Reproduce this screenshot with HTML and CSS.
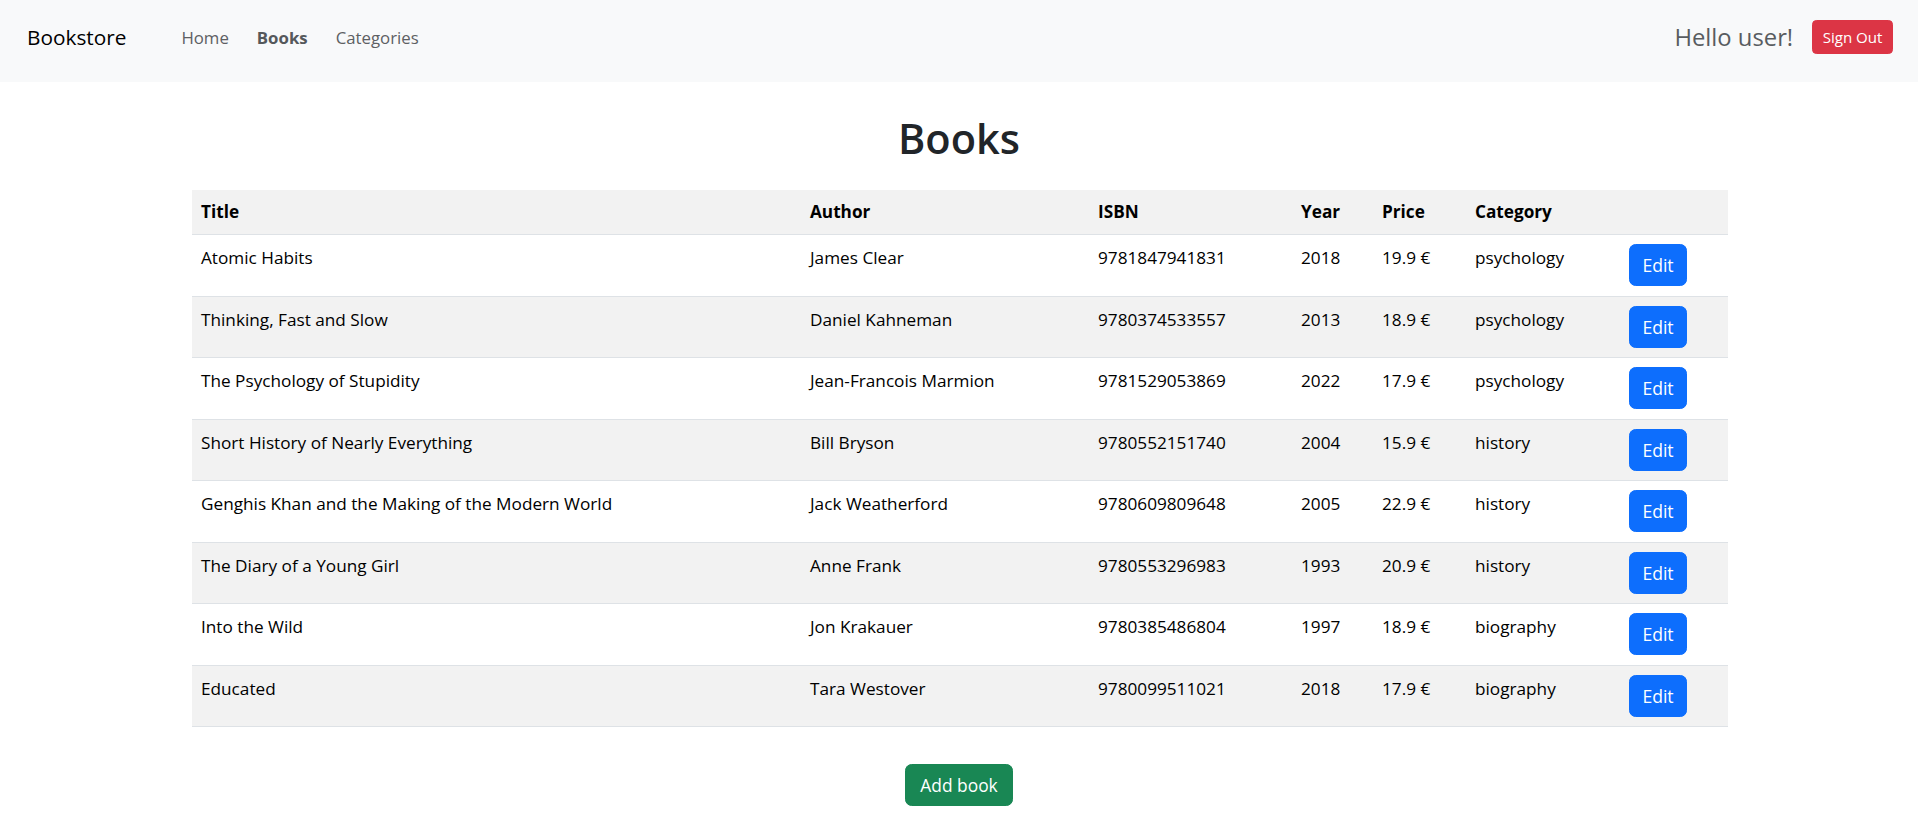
FILE: index.html
```html
<!DOCTYPE html>
<html lang="en">
<head>
<meta charset="utf-8">
<title>Bookstore</title>
<link rel="stylesheet" href="styles.css">
</head>
<body>
<nav class="navbar">
  <a class="brand" href="#">Bookstore</a>
  <ul class="nav-links">
    <li><a href="#" class="nav-link">Home</a></li>
    <li><a href="#" class="nav-link active">Books</a></li>
    <li><a href="#" class="nav-link">Categories</a></li>
  </ul>
  <div class="nav-right">
    <span class="greeting">Hello user!</span>
    <button class="btn btn-danger">Sign Out</button>
  </div>
</nav>
<main class="content">
  <h1 class="page-title">Books</h1>
  <table class="books">
    <colgroup>
      <col class="c-title"><col class="c-author"><col class="c-isbn"><col class="c-year"><col class="c-price"><col class="c-cat"><col class="c-act">
    </colgroup>
    <thead>
      <tr><th>Title</th><th>Author</th><th>ISBN</th><th>Year</th><th>Price</th><th>Category</th><th></th></tr>
    </thead>
    <tbody>
      <tr><td>Atomic Habits</td><td>James Clear</td><td>9781847941831</td><td>2018</td><td>19.9 €</td><td>psychology</td><td class="act"><button class="btn btn-primary">Edit</button></td></tr>
      <tr><td>Thinking, Fast and Slow</td><td>Daniel Kahneman</td><td>9780374533557</td><td>2013</td><td>18.9 €</td><td>psychology</td><td class="act"><button class="btn btn-primary">Edit</button></td></tr>
      <tr><td>The Psychology of Stupidity</td><td>Jean-Francois Marmion</td><td>9781529053869</td><td>2022</td><td>17.9 €</td><td>psychology</td><td class="act"><button class="btn btn-primary">Edit</button></td></tr>
      <tr><td>Short History of Nearly Everything</td><td>Bill Bryson</td><td>9780552151740</td><td>2004</td><td>15.9 €</td><td>history</td><td class="act"><button class="btn btn-primary">Edit</button></td></tr>
      <tr><td>Genghis Khan and the Making of the Modern World</td><td>Jack Weatherford</td><td>9780609809648</td><td>2005</td><td>22.9 €</td><td>history</td><td class="act"><button class="btn btn-primary">Edit</button></td></tr>
      <tr><td>The Diary of a Young Girl</td><td>Anne Frank</td><td>9780553296983</td><td>1993</td><td>20.9 €</td><td>history</td><td class="act"><button class="btn btn-primary">Edit</button></td></tr>
      <tr><td>Into the Wild</td><td>Jon Krakauer</td><td>9780385486804</td><td>1997</td><td>18.9 €</td><td>biography</td><td class="act"><button class="btn btn-primary">Edit</button></td></tr>
      <tr><td>Educated</td><td>Tara Westover</td><td>9780099511021</td><td>2018</td><td>17.9 €</td><td>biography</td><td class="act"><button class="btn btn-primary">Edit</button></td></tr>
    </tbody>
  </table>
  <div class="actions">
    <button class="btn btn-success">Add book</button>
  </div>
</main>
</body>
</html>
```
FILE: styles.css
```css
* { box-sizing: border-box; }

html, body {
  margin: 0;
  padding: 0;
  background: #ffffff;
  font-family: "Open Sans", "Noto Sans", sans-serif;
  color: #212529;
}

.navbar {
  display: flex;
  align-items: center;
  height: 82px;
  padding: 0 25px 8px 27px;
  background: #f8f9fa;
}

.brand {
  font-size: 20.8px;
  color: #000;
  text-decoration: none;
  line-height: 30px;
}

.nav-links {
  display: flex;
  gap: 28px;
  list-style: none;
  margin: 0 0 0 55px;
  padding: 0;
}

.nav-link {
  font-size: 16.8px;
  line-height: 25px;
  color: #5d6063;
  text-decoration: none;
}

.nav-link.active {
  font-weight: 700;
  color: #55585b;
}

.nav-right {
  margin-left: auto;
  display: flex;
  align-items: center;
  gap: 19px;
}

.greeting {
  font-size: 23.8px;
  line-height: 32px;
  color: #585c60;
}

.btn {
  font-family: inherit;
  border: 1px solid transparent;
  color: #fff;
  cursor: pointer;
  margin: 0;
}

.btn-danger {
  background: #dc3545;
  border-color: #dc3545;
  font-size: 15.1px;
  height: 34px;
  line-height: 32px;
  padding: 0 9.5px;
  border-radius: 4.4px;
}

.btn-primary {
  background: #0d6efd;
  border-color: #0d6efd;
  font-size: 17.6px;
  height: 42px;
  line-height: 40px;
  padding: 0 12.4px;
  border-radius: 6.6px;
  display: block;
}

.btn-success {
  background: #198754;
  border-color: #198754;
  font-size: 17.4px;
  height: 42px;
  line-height: 40px;
  padding: 0 14.3px;
  border-radius: 6.6px;
}

.page-title {
  margin: 31.5px 0 27.3px;
  text-align: center;
  font-size: 41.5px;
  font-weight: 600;
  line-height: 49.2px;
  color: #212529;
}

.books {
  width: 1536px;
  margin: 0 0 0 calc(50% - 767px);
  table-layout: fixed;
  border-collapse: separate;
  border-spacing: 0;
  font-size: 17.2px;
  color: #000;
}

.c-title { width: 609px; }
.c-author { width: 288px; }
.c-isbn { width: 203px; }
.c-year { width: 81px; }
.c-price { width: 93px; }
.c-cat { width: 153px; }
.c-act { width: 109px; }

.books th {
  text-align: left;
  font-weight: 700;
  padding: 9px 9px;
  line-height: 26px;
  background: #f2f2f2;
  border-bottom: 1px solid #dee2e6;
}

.books td {
  padding: 9.25px 9px;
  line-height: 28px;
  vertical-align: top;
  border-bottom: 1px solid #dee2e6;
  white-space: nowrap;
}

.books td.act {
  padding-left: 10px;
}

.books tbody tr:nth-child(even) td {
  background: #f2f2f2;
}

.actions {
  display: flex;
  justify-content: center;
  margin-top: 37px;
}
```
